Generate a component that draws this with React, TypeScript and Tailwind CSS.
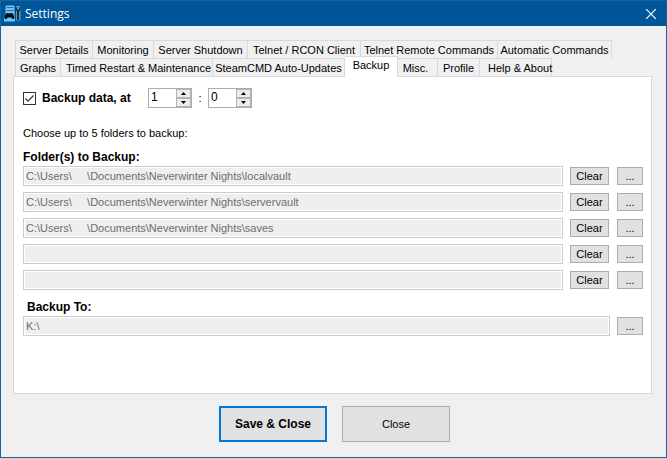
import { useState } from "react";

type Tab = { label: string; box: string };

const topTabs: Tab[] = [
  { label: "Server Details", box: "w-[78px]" },
  { label: "Monitoring", box: "w-[61px]" },
  { label: "Server Shutdown", box: "w-[94px]" },
  { label: "Telnet / RCON Client", box: "w-[113px]" },
  { label: "Telnet Remote Commands", box: "w-[137px]" },
  { label: "Automatic Commands", box: "w-[114px]" },
];

const bottomTabs: Tab[] = [
  { label: "Graphs", box: "w-[46px]" },
  { label: "Timed Restart & Maintenance", box: "w-[152px] pl-1" },
  { label: "SteamCMD Auto-Updates", box: "w-[132px]" },
  { label: "Backup", box: "w-[53px]" },
  { label: "Misc.", box: "w-[40px] pr-1" },
  { label: "Profile", box: "w-[42px]" },
  { label: "Help & About", box: "w-[72px] pl-2" },
];

const initialFolders = [
  "C:\\Users\\     \\Documents\\Neverwinter Nights\\localvault",
  "C:\\Users\\     \\Documents\\Neverwinter Nights\\servervault",
  "C:\\Users\\     \\Documents\\Neverwinter Nights\\saves",
  "",
  "",
];

const buttonLook = "shrink-0 border border-[#adadad] bg-[#e1e1e1]";
const pathLook =
  "h-5 min-w-0 flex-1 border border-[#cccccc] bg-[#efefef] px-[2px] text-[#6d6d6d] shadow-[inset_0_0_0_1px_#ffffff]";

function AppIcon() {
  return (
    <svg width="17" height="17" viewBox="0 0 17 17" aria-hidden="true">
      <path d="M1.500 1.500L2.500 .5H9.500L10.500 1.500V15H1.500Z" fill="#6cc6f2" />
      <path d="M2.500 2.500H9.500M2.500 5.500H9.500" stroke="#2476ad" strokeWidth="1" />
      <path d="M0 13V16.500H11V13Z" fill="#6cc6f2" />
      <path
        d="M3 8C4 7.600 4.500 8.500 5.500 8.500S7 7.600 8 8C9.500 9 10.500 11.500 10.200 13.500C9.800 15 8.200 14 7.200 12.500H3.800C2.800 14 1.200 15 .8 13.500C.5 11.500 1.500 9 3 8Z"
        fill="#060c12"
      />
      <path d="M12 1H16.500V15.500H12Z" fill="#4b9fcd" />
      <path d="M11.500 1.500V5L13 6.500V15H15V6.500L16.500 5V1.500L15.200 2.500V4.500H12.900V2.500Z" fill="#1f2d38" />
    </svg>
  );
}

function TabButton({ tab, selected, onSelect }: { tab: Tab; selected: boolean; onSelect: () => void }) {
  return (
    <button
      type="button"
      role="tab"
      aria-selected={selected}
      onClick={onSelect}
      className={`${tab.box} shrink-0 whitespace-nowrap border-r border-t border-[#d9d9d9] first:border-l ${
        selected ? "z-10 -mb-px -mt-[2px] bg-white pb-1" : "bg-[#f0f0f0]"
      }`}
    >
      {tab.label}
    </button>
  );
}

function Spinner({ label, max, initial }: { label: string; max: number; initial: number }) {
  const [value, setValue] = useState(initial);
  const step = (by: number) => setValue((v) => Math.min(max, Math.max(0, v + by)));
  return (
    <div className="flex h-5 w-11 border border-[#abadb3] bg-white">
      <input
        type="number"
        aria-label={label}
        value={value}
        min={0}
        max={max}
        onChange={(e) => setValue(Number(e.target.value))}
        className="h-4 w-[27px] appearance-none pl-[2px] text-[12px] outline-none [appearance:textfield] [&::-webkit-inner-spin-button]:appearance-none"
      />
      <div className="flex w-[15px] flex-col">
        {[1, -1].map((by) => (
          <button
            key={by}
            type="button"
            aria-label={`${label} ${by > 0 ? "up" : "down"}`}
            onClick={() => step(by)}
            className="flex flex-1 items-center justify-center border border-[#b4b4b4] bg-[#ececec]"
          >
            <svg width="5" height="3" viewBox="0 0 5 3" aria-hidden="true">
              <path d={by > 0 ? "M0 3L2.500 0L5 3Z" : "M0 0L2.500 3L5 0Z"} fill="#000" />
            </svg>
          </button>
        ))}
      </div>
    </div>
  );
}

export default function App() {
  const [active, setActive] = useState("Backup");
  const [folders, setFolders] = useState(initialFolders);
  const renderTabs = (tabs: Tab[]) =>
    tabs.map((tab) => (
      <TabButton key={tab.label} tab={tab} selected={tab.label === active} onSelect={() => setActive(tab.label)} />
    ));

  return (
    <div className="flex min-h-screen w-full flex-col border border-[#1662a3] bg-[#f0f0f0] font-['Liberation_Sans',Arial,sans-serif] text-[11px] leading-4 text-black">
      <header className="flex h-[25px] items-center bg-[#005599] pl-[3px] pr-[10px] text-white">
        <AppIcon />
        <h1 className="ml-1 flex-1 font-['Open_Sans','Noto_Sans',sans-serif] text-[12px]">Settings</h1>
        <button type="button" aria-label="Close window">
          <svg width="10" height="10" viewBox="0 0 10 10" aria-hidden="true">
            <path d="M0 0L10 10M10 0L0 10" stroke="#fff" strokeWidth="1.200" />
          </svg>
        </button>
      </header>

      <main className="ml-3 mr-[14px] mt-[14px] flex flex-1 flex-col">
        <div role="tablist" className="flex flex-col pl-[2px]">
          <div className="flex h-[18px]">{renderTabs(topTabs)}</div>
          <div className="flex h-[18px]">{renderTabs(bottomTabs)}</div>
        </div>

        <section role="tabpanel" className="flex-1 border border-[#d9d9d9] bg-white pb-4 pl-[9px] pr-2 pt-[11px]">
          <div className="flex h-5 items-center">
            <label className="flex items-center gap-[6px] text-[12px] font-bold">
              <span className="grid">
                <input
                  type="checkbox"
                  defaultChecked
                  className="peer col-start-1 row-start-1 size-[13px] appearance-none border border-[#333333] bg-white"
                />
                <svg
                  width="13"
                  height="13"
                  viewBox="0 0 13 13"
                  aria-hidden="true"
                  className="pointer-events-none invisible col-start-1 row-start-1 peer-checked:visible"
                >
                  <path d="M2.500 6.500L5 9.200L10.500 3.500" fill="none" stroke="#333" strokeWidth="1.200" />
                </svg>
              </span>
              <span className="w-[106px]">Backup data, at</span>
            </label>
            <Spinner label="Hour" max={23} initial={1} />
            <span className="w-4 text-center">:</span>
            <Spinner label="Minute" max={59} initial={0} />
          </div>

          <p className="mt-[17px]">Choose up to 5 folders to backup:</p>
          <h2 className="mt-2 text-[12px] font-bold leading-4">Folder(s) to Backup:</h2>
          <div className="mt-px flex flex-col gap-[6px]">
            {folders.map((folder, i) => (
              <div key={i} className="flex items-center">
                <input type="text" readOnly aria-label={`Folder ${i + 1}`} value={folder} className={pathLook} />
                <button
                  type="button"
                  onClick={() => setFolders(folders.map((f, n) => (n === i ? "" : f)))}
                  className={`${buttonLook} ml-[7px] h-[18px] w-[39px]`}
                >
                  Clear
                </button>
                <button type="button" aria-label={`Browse folder ${i + 1}`} className={`${buttonLook} ml-2 h-[18px] w-[26px]`}>
                  ...
                </button>
              </div>
            ))}
          </div>

          <label htmlFor="backup-to" className="mt-[9px] block pl-1 text-[12px] font-bold">
            Backup To:
          </label>
          <div className="mt-px flex items-center">
            <input id="backup-to" type="text" readOnly value={"K:\\"} className={pathLook} />
            <button type="button" aria-label="Browse backup target" className={`${buttonLook} ml-[7px] h-[18px] w-[26px]`}>
              ...
            </button>
          </div>
        </section>
      </main>

      <footer className="flex justify-center gap-[15px] pb-[15px] pl-[2px] pt-3">
        <button type="button" className="h-9 w-[108px] border-2 border-[#0078d7] bg-[#e1e1e1] text-[12px] font-bold">
          Save & Close
        </button>
        <button type="button" className={`${buttonLook} h-9 w-[108px]`}>
          Close
        </button>
      </footer>
    </div>
  );
}
